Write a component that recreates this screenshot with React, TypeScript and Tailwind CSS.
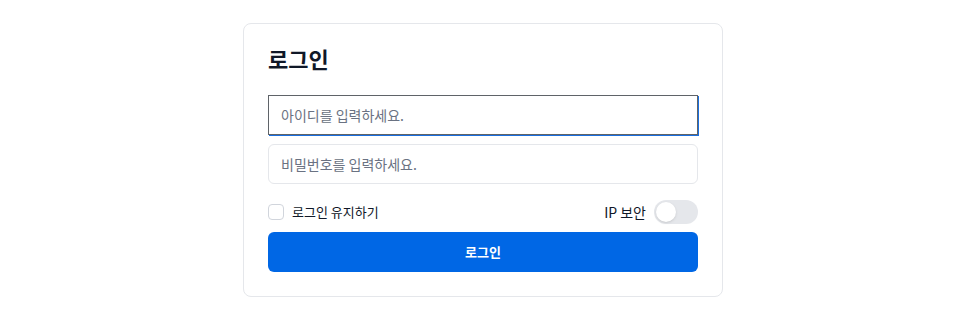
import React, { useState } from 'react';

export default function App() {
  const [keep, setKeep] = useState(false);
  const [ipSecure, setIpSecure] = useState(false);

  return (
    <div
      className="flex min-h-[316px] w-full justify-center bg-white pl-[2px] pt-[23px]"
      style={{ fontFamily: '"Noto Sans CJK KR", "Noto Sans", sans-serif' }}
    >
      <div className="h-[274px] w-[480px] rounded-lg border border-gray-200 bg-white px-6 pt-[18px]">
        {/* Title */}
        <h1 className="text-[22px] font-bold leading-[32px] text-gray-900">로그인</h1>

        {/* Inputs */}
        <div className="mt-[21px] flex flex-col gap-2">
          <input
            type="text"
            autoFocus
            placeholder="아이디를 입력하세요."
            className="h-[40px] w-full border border-[#5f6368] px-3 text-sm text-gray-900 caret-black shadow-[1px_1px_0_0_#1a6fe0] outline-none placeholder:text-gray-500"
          />
          <input
            type="password"
            placeholder="비밀번호를 입력하세요."
            className="mt-px h-10 w-full rounded-md border border-gray-200 px-3 text-sm text-gray-900 outline-none placeholder:text-gray-500"
          />
        </div>

        {/* Options row */}
        <div className="mt-4 flex h-6 items-center justify-between">
          <label className="flex items-center gap-2 text-[13px] text-gray-900">
            <span
              onClick={() => setKeep(!keep)}
              className={`h-4 w-4 rounded border ${keep ? 'border-[#0067e5] bg-[#0067e5]' : 'border-gray-300 bg-white'}`}
            />
            로그인 유지하기
          </label>
          <div className="flex items-center gap-2 text-sm text-gray-900">
            <span>IP 보안</span>
            <button
              type="button"
              onClick={() => setIpSecure(!ipSecure)}
              className={`flex h-6 w-11 items-center rounded-full p-[2px] ${ipSecure ? 'justify-end bg-[#0067e5]' : 'justify-start bg-gray-200'}`}
            >
              <span className="h-5 w-5 rounded-full bg-white shadow" />
            </button>
          </div>
        </div>

        {/* Submit */}
        <button
          type="button"
          className="mt-2 h-10 w-full rounded-md bg-[#0067e5] text-[13px] font-bold text-white"
        >
          로그인
        </button>
      </div>
    </div>
  );
}
